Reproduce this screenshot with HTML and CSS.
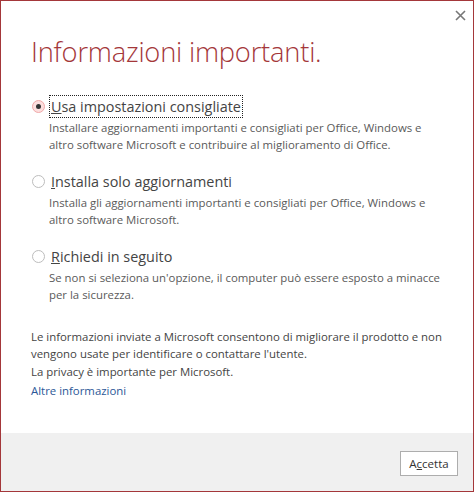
FILE: index.html
```html
<html>
<head>
  <title>Informazioni importanti</title>
  <link rel="stylesheet" href="styles.css">
</head>
<body>
<div class="window">
  <button class="close" title="Chiudi">
    <svg width="11" height="11" viewBox="0 0 11 11"><path d="M1 1 L10 10 M10 1 L1 10" stroke="#777" stroke-width="1.6" /></svg>
  </button>

  <div class="content">
    <h1 class="title">Informazioni importanti.</h1>

    <div class="option">
      <label class="choice">
        <span class="radio checked"></span>
        <span class="label focused"><u>U</u>sa impostazioni consigliate</span>
      </label>
      <p class="desc">Installare aggiornamenti importanti e consigliati per Office, Windows e<br>altro software Microsoft e contribuire al miglioramento di Office.</p>
    </div>

    <div class="option">
      <label class="choice">
        <span class="radio"></span>
        <span class="label"><u>I</u>nstalla solo aggiornamenti</span>
      </label>
      <p class="desc">Installa gli aggiornamenti importanti e consigliati per Office, Windows e<br>altro software Microsoft.</p>
    </div>

    <div class="option">
      <label class="choice">
        <span class="radio"></span>
        <span class="label"><u>R</u>ichiedi in seguito</span>
      </label>
      <p class="desc">Se non si seleziona un'opzione, il computer può essere esposto a minacce<br>per la sicurezza.</p>
    </div>

    <div class="privacy">
      <p>Le informazioni inviate a Microsoft consentono di migliorare il prodotto e non<br>vengono usate per identificare o contattare l'utente.</p>
      <p>La privacy è importante per Microsoft.</p>
      <a class="more" href="#">Altre informazioni</a>
    </div>
  </div>

  <div class="footer">
    <button class="btn">A<u>c</u>cetta</button>
  </div>
</div>
</body>
</html>
```

FILE: styles.css
```css
body {
  margin: 0;
  background: #fff;
  font-family: "Open Sans", "Noto Sans", sans-serif;
}

.window {
  position: relative;
  box-sizing: border-box;
  width: 474px;
  height: 492px;
  border: 1px solid #a4373a;
  display: flex;
  flex-direction: column;
}

.close {
  position: absolute;
  top: 9px;
  right: 7px;
  border: 0;
  padding: 0;
  background: none;
  line-height: 0;
}

.content {
  flex: 1;
  padding: 0 30px;
}

.title {
  margin: 32px 0 0 0;
  font-size: 27.3px;
  font-weight: 300;
  line-height: 38px;
  color: #a4373a;
  letter-spacing: -0.2px;
}

.option:first-of-type {
  margin-top: 23px;
}

.choice {
  display: flex;
  align-items: center;
  gap: 4px;
  height: 24px;
  margin-left: 1px;
}

.radio {
  box-sizing: border-box;
  width: 13px;
  height: 13px;
  border: 1px solid #bdbdbd;
  border-radius: 50%;
  background: #fff;
  display: flex;
  align-items: center;
  justify-content: center;
}

.radio.checked {
  border-color: #f0a8a8;
  background: #fcdede;
}

.radio.checked::after {
  content: "";
  width: 5px;
  height: 5px;
  border-radius: 50%;
  background: #333;
}

.label {
  font-size: 14.4px;
  color: #444;
  padding: 0 1px;
  border: 1px dotted transparent;
  line-height: 21px;
}

.label.focused {
  border-color: #222;
}

.desc {
  margin: 1px 0 0 18px;
  font-size: 11.4px;
  line-height: 17px;
  color: #5a5a5a;
  height: 50px;
}

.privacy {
  margin-top: 9px;
  font-size: 11.4px;
  line-height: 17px;
  color: #444;
}

.privacy p {
  margin: 0 0 1px 0;
}

.more {
  color: #2b5797;
  text-decoration: none;
  line-height: 19px;
}

.footer {
  height: 58px;
  background: #f0f0f0;
  display: flex;
  align-items: center;
  justify-content: flex-end;
  padding-right: 15px;
}

.btn {
  font-family: "Open Sans", "Noto Sans", sans-serif;
  font-size: 11.5px;
  color: #333;
  background: #fff;
  border: 1px solid #adadad;
  width: 58px;
  height: 25px;
  padding: 0;
  margin-top: 2px;
}
```
